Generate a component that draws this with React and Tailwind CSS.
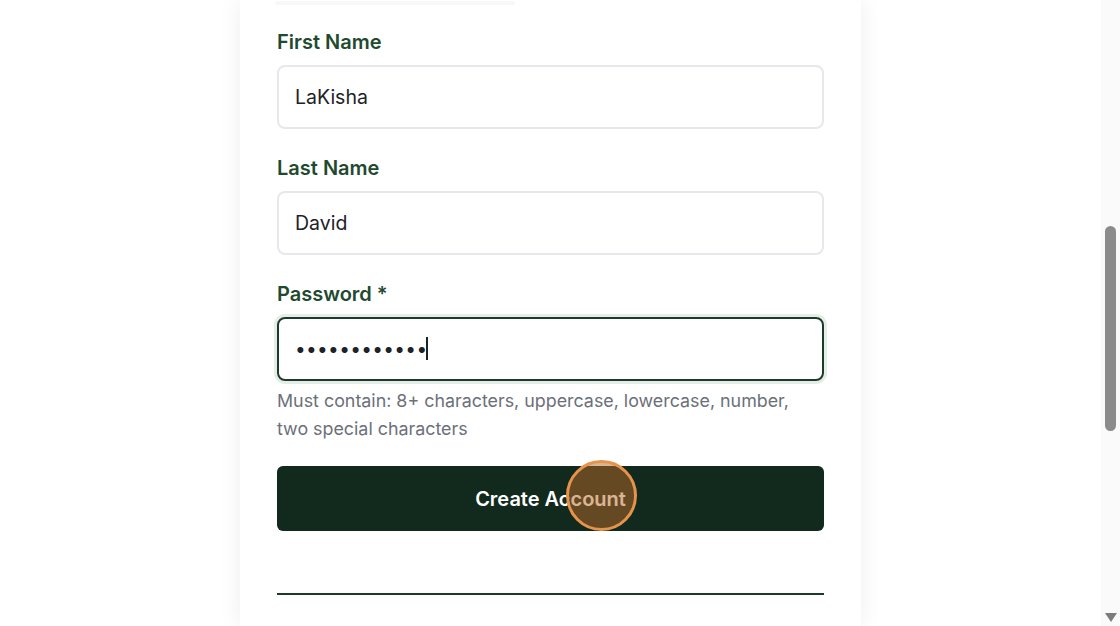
import { useState } from "react";

export default function App() {
  const [first, setFirst] = useState("LaKisha");
  const [last, setLast] = useState("David");
  const [pwd, setPwd] = useState("Passw0rd!!ab");

  return (
    <div
      className="flex h-[626px] w-[1120px] overflow-hidden bg-white"
      style={{ fontFamily: "Inter, 'Noto Sans', sans-serif" }}
    >
      {/* ---------- page ---------- */}
      <div className="flex flex-1 justify-center">
        <div className="w-[621px] bg-white px-[37px] shadow-[0_0_22px_rgba(0,0,0,0.07)]">
          {/* faint remains of the line above, scrolled out of view */}
          <div className="ml-[-2px] mt-[1px] h-[4px] w-[240px] rounded-sm bg-[#f7f9f7]" />

          <form className="pt-[23px]" onSubmit={(e) => e.preventDefault()}>
            <label className="block text-[20px] font-semibold leading-[28px] text-[#1f4a2f]">
              First Name
            </label>
            <input
              value={first}
              onChange={(e) => setFirst(e.target.value)}
              className="mt-[9px] block h-[64px] w-full rounded-lg border-2 border-[#e6e8eb] px-[16px] text-[19.5px] text-[#1d2227] outline-none"
            />

            <label className="mt-[25px] block text-[20px] font-semibold leading-[28px] text-[#1f4a2f]">
              Last Name
            </label>
            <input
              value={last}
              onChange={(e) => setLast(e.target.value)}
              className="mt-[9px] block h-[64px] w-full rounded-lg border-2 border-[#e6e8eb] px-[16px] text-[19.5px] text-[#1d2227] outline-none"
            />

            <label className="mt-[25px] block text-[20px] font-semibold leading-[28px] text-[#1f4a2f]">
              Password *
            </label>
            <div className="relative mt-[9px]">
              <input
                type="password"
                value={pwd}
                onChange={(e) => setPwd(e.target.value)}
                className="block h-[64px] w-full rounded-lg border-2 border-[#1c3b2b] px-[16px] text-[19px] tracking-[0.35px] text-[#1d2227] shadow-[0_0_0_3px_#e4eee7] outline-none"
              />
              {/* text caret */}
              <span className="pointer-events-none absolute left-[149px] top-[20px] h-[23px] w-[1.5px] bg-[#1d2227]" />
            </div>
            <p className="mt-[6px] text-[17.85px] leading-[28px] text-[#6b7079]">
              Must contain: 8+ characters, uppercase, lowercase, number,
              <br />
              two special characters
            </p>

            <div className="relative mt-[23px]">
              <button
                type="submit"
                className="block h-[65px] w-full rounded-md bg-[#12291d] text-[20px] font-semibold text-white"
              >
                Create Account
              </button>
              {/* click marker */}
              <span className="pointer-events-none absolute left-[289px] top-[-6px] h-[71px] w-[71px] rounded-full border-[3px] border-[#e6944c] bg-[#b8692a]/50" />
            </div>

            <div className="mt-[62px] h-[2px] w-full bg-[#1c3b2b]" />
          </form>
        </div>
      </div>

      {/* ---------- scrollbar ---------- */}
      <div className="flex w-[19px] flex-col items-center bg-[#fafafa]">
        <div className="mt-[226px] h-[205px] w-[11px] rounded-full bg-[#8b8b8b]" />
        <div className="mt-auto mb-[4px] h-0 w-0 border-x-[6px] border-t-[9px] border-x-transparent border-t-[#7c7c7c]" />
      </div>
    </div>
  );
}
